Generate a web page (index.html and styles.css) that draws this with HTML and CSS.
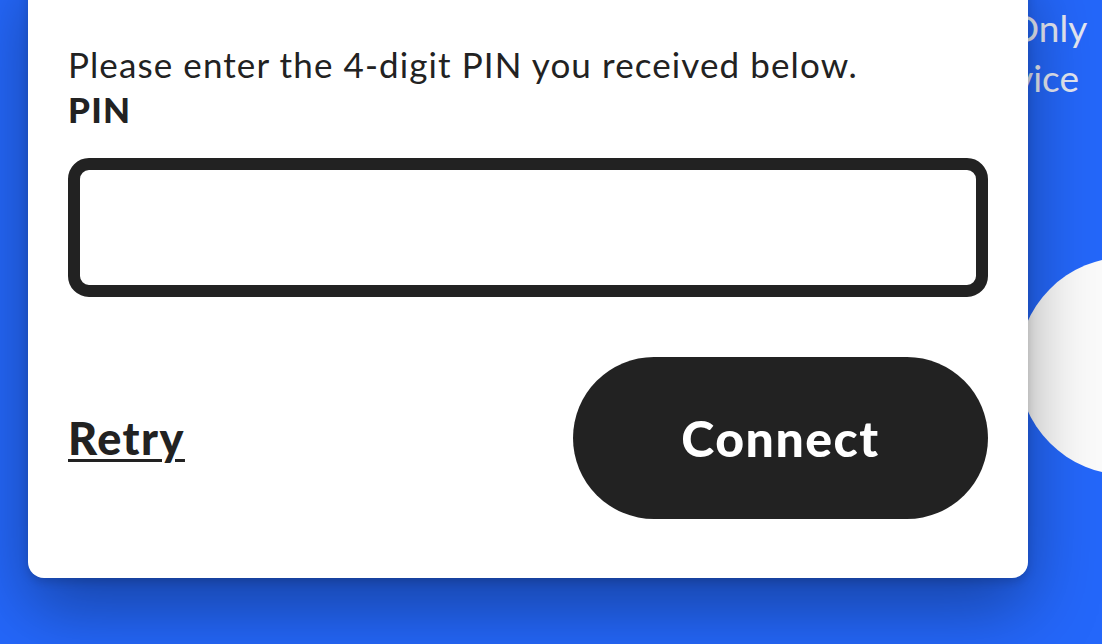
FILE: index.html
```html
<!DOCTYPE html>
<html lang="en">
<head>
<meta charset="utf-8">
<title>Enter PIN</title>
<link rel="stylesheet" href="styles.css">
</head>
<body>
<div class="page">
  <div class="page-text">
    <span class="line line-1">Connect Only</span>
    <span class="line line-2">this device</span>
  </div>
  <div class="page-circle"></div>
</div>
<div class="modal">
  <p class="intro">Please enter the 4-digit PIN you received below.</p>
  <label class="label" for="pin">PIN</label>
  <input class="pin-input" id="pin" type="text">
  <div class="actions">
    <a class="retry" href="#">Retry</a>
    <button class="connect" type="button">Connect</button>
  </div>
</div>
</body>
</html>
```
FILE: styles.css
```css
html, body {
  margin: 0;
  padding: 0;
}
body {
  width: 1102px;
  height: 644px;
  overflow: hidden;
  background: #2467fa;
  font-family: Lato, "Noto Sans", sans-serif;
  position: relative;
}
.page {
  position: relative;
  width: 100%;
  height: 100%;
}
.page-text {
  position: absolute;
  left: 800px;
  top: 3px;
  display: flex;
  flex-direction: column;
  color: #e4e8f2;
  font-size: 37px;
  line-height: 50px;
  white-space: nowrap;
}
.line-1 { margin-left: 63px; }
.line-2 { margin-left: 106px; }
.page-circle {
  position: absolute;
  left: 1018px;
  top: 257px;
  width: 218px;
  height: 218px;
  border-radius: 50%;
  background: #fbfbfb;
}
.modal {
  position: absolute;
  left: 28px;
  top: -40px;
  width: 1000px;
  height: 618px;
  box-sizing: border-box;
  padding: 82px 40px 0;
  background: #fff;
  border-radius: 16px;
  box-shadow: 0 30px 70px rgba(0, 0, 0, 0.35), 0 4px 10px rgba(0,0,0,0.15);
  display: flex;
  flex-direction: column;
  color: #222;
}
.intro {
  margin: 0;
  font-size: 35px;
  line-height: 45px;
  letter-spacing: 1.1px;
  font-weight: 400;
}
.label {
  font-size: 35px;
  line-height: 45px;
  letter-spacing: 1.2px;
  font-weight: 900;
}
.pin-input {
  margin-top: 26px;
  height: 139px;
  box-sizing: border-box;
  border: 12px solid #222;
  border-radius: 21px;
  outline: none;
  background: #fff;
  font-size: 40px;
  padding: 0 20px;
  font-family: inherit;
}
.actions {
  margin-top: 60px;
  display: flex;
  justify-content: space-between;
  align-items: center;
}
.retry {
  color: #222;
  font-size: 45px;
  font-weight: 900;
  letter-spacing: 1.5px;
  text-decoration: underline;
  text-decoration-thickness: 3px;
  text-underline-offset: 4px;
}
.connect {
  width: 415px;
  height: 162px;
  border: none;
  border-radius: 81px;
  background: #222;
  color: #fff;
  font-family: inherit;
  font-size: 50px;
  font-weight: 900;
  letter-spacing: 1.5px;
  cursor: pointer;
}
```
